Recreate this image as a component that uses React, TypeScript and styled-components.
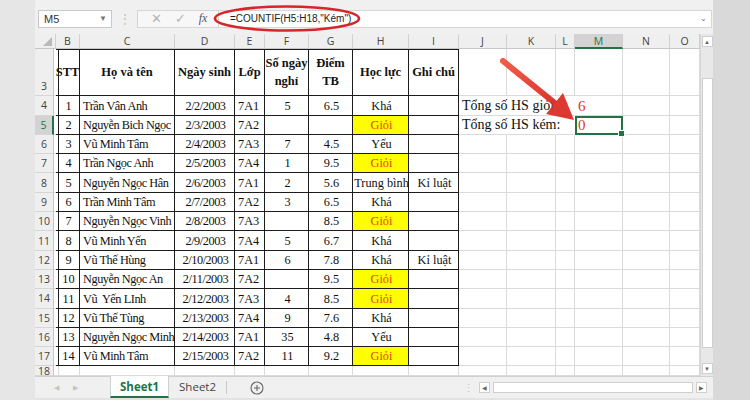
import styled, { createGlobalStyle } from 'styled-components';

const GlobalStyle = createGlobalStyle`
  body {
    margin: 0;
    background: #e3e3e3;
    font-family: "Liberation Sans", Arial, sans-serif;
  }
`;

const Page = styled.div`
  width: 750px;
  height: 400px;
  display: flex;
  background: #e3e3e3;
  overflow: hidden;
`;

const Gutter = styled.div<{ $w: number; $bg: string }>`
  width: ${({ $w }) => $w}px;
  flex-shrink: 0;
  background: ${({ $bg }) => $bg};
`;

const Window = styled.div`
  width: 678px;
  height: 398px;
  flex-shrink: 0;
  display: flex;
  flex-direction: column;
  background: #f0f0f0;
  position: relative;
`;

/* ---------- formula bar ---------- */

const FormulaBar = styled.div`
  height: 35px;
  display: flex;
  align-items: center;
  padding: 3px 0 0 3px;
  box-sizing: border-box;
  position: relative;
`;

const NameBox = styled.div`
  width: 74px;
  height: 18px;
  box-sizing: border-box;
  background: #fff;
  border: 1px solid #c8c8c8;
  display: flex;
  align-items: center;
  justify-content: space-between;
  padding: 0 4px 0 5px;
  font-family: "Liberation Sans", Arial, sans-serif;
  font-size: 11px;
  color: #333;
`;

const Caret = styled.span`
  font-size: 8px;
  color: #777;
`;

const Dots = styled.span`
  width: 25px;
  text-align: center;
  color: #c0c0c0;
  font-size: 12px;
`;

const FxGroup = styled.div`
  width: 81px;
  height: 18px;
  box-sizing: border-box;
  border: 1px solid #d6d6d6;
  border-right: none;
  background: #f7f7f7;
  display: flex;
  align-items: center;
  justify-content: space-around;
  padding: 0 4px 0 6px;
  color: #b4b4b4;
  font-size: 13px;
`;

const FxLabel = styled.span`
  font-family: "Liberation Serif", serif;
  font-style: italic;
  font-size: 12px;
  color: #555;
`;

const FormulaInput = styled.div`
  width: 494px;
  height: 18px;
  box-sizing: border-box;
  border: 1px solid #d6d6d6;
  background: #fff;
  display: flex;
  align-items: center;
  justify-content: space-between;
  padding: 0 4px 0 11px;
  font-family: "Liberation Sans", Arial, sans-serif;
  font-size: 10px;
  color: #222;
`;

const Overlay = styled.svg`
  position: absolute;
  left: 0;
  top: 0;
  pointer-events: none;
`;

/* ---------- grid ---------- */

const GridArea = styled.div`
  display: flex;
  position: relative;
`;

const colWidths = [19, 2, 24, 95, 60, 30, 44, 44, 56, 50, 48, 49, 19, 48, 47, 30];

const Sheet = styled.div`
  width: 665px;
  display: grid;
  grid-template-columns: ${colWidths.map((w) => `${w}px`).join(' ')};
  grid-template-rows: 15px 47px repeat(14, 19.3px) 10px;
  background: #fff;
  overflow: hidden;
`;

const Corner = styled.div`
  grid-column: span 2;
  background: #efefef;
  border-right: 1px solid #d0d0d0;
  border-bottom: 1px solid #c6c6c6;
  position: relative;
  &:after {
    content: '';
    position: absolute;
    right: 3px;
    bottom: 2px;
    border-left: 9px solid transparent;
    border-bottom: 9px solid #b9b9b9;
  }
`;

const ColHead = styled.div<{ $active?: boolean }>`
  background: ${({ $active }) => ($active ? '#d3d3d3' : '#efefef')};
  color: ${({ $active }) => ($active ? '#217346' : '#444')};
  border-right: 1px solid #d0d0d0;
  border-bottom: ${({ $active }) => ($active ? '2px solid #217346' : '1px solid #c6c6c6')};
  font-family: "Open Sans", sans-serif;
  font-size: 10.5px;
  display: flex;
  align-items: center;
  justify-content: center;
  overflow: hidden;
`;

const RowHead = styled.div<{ $active?: boolean; $bottom?: boolean }>`
  background: ${({ $active }) => ($active ? '#d3d3d3' : '#efefef')};
  color: ${({ $active }) => ($active ? '#217346' : '#444')};
  border-right: ${({ $active }) => ($active ? '2px solid #217346' : '1px solid #c6c6c6')};
  border-bottom: 1px solid #d6d6d6;
  font-family: "Open Sans", sans-serif;
  font-size: 10.5px;
  display: flex;
  align-items: ${({ $bottom }) => ($bottom ? 'flex-end' : 'center')};
  justify-content: center;
  padding-bottom: ${({ $bottom }) => ($bottom ? '2px' : '0')};
  box-sizing: border-box;
`;

type Align = 'left' | 'center' | 'right';

const Cell = styled.div<{
  $align?: Align;
  $table?: boolean;
  $top?: boolean;
  $edge?: boolean;
  $spill?: boolean;
  $bg?: string;
  $color?: string;
  $head?: boolean;
  $size?: number;
  $tight?: boolean;
}>`
  min-width: 0;
  display: flex;
  align-items: ${({ $head }) => ($head ? 'center' : 'flex-end')};
  justify-content: ${({ $align }) =>
    $align === 'left' ? 'flex-start' : $align === 'right' ? 'flex-end' : 'center'};
  text-align: center;
  padding: ${({ $head }) => ($head ? '0' : '0 1px 1px 3px')};
  box-sizing: border-box;
  white-space: ${({ $head }) => ($head ? 'normal' : 'pre')};
  font-family: "Liberation Serif", "Times New Roman", serif;
  font-size: ${({ $size }) => $size ?? 12.3}px;
  font-weight: ${({ $head }) => ($head ? 700 : 400)};
  letter-spacing: ${({ $tight }) => ($tight ? '-0.45px' : '0')};
  line-height: ${({ $head }) => ($head ? '18px' : '16px')};
  color: ${({ $color }) => $color ?? '#111'};
  background: ${({ $bg }) => $bg ?? 'transparent'};
  border-bottom: 1px solid ${({ $table }) => ($table ? '#1c1c1c' : '#dadada')};
  border-right: ${({ $table, $edge, $spill }) =>
    $spill ? '1px solid transparent' : `1px solid ${$table || $edge ? '#1c1c1c' : '#dadada'}`};
  box-shadow: ${({ $top }) => ($top ? 'inset 0 1px 0 #1c1c1c' : 'none')};
  overflow: visible;
`;

const Selected = styled(Cell)`
  position: relative;
  outline: 2px solid #217346;
  outline-offset: -2px;
  &:after {
    content: '';
    position: absolute;
    right: -3px;
    bottom: -3px;
    width: 5px;
    height: 5px;
    background: #217346;
    border: 1px solid #fff;
  }
`;

const VScroll = styled.div`
  width: 13px;
  background: #e8e8e8;
  border-left: 1px solid #d6d6d6;
  box-sizing: border-box;
  display: flex;
  flex-direction: column;
  align-items: center;
  padding: 2px 0 2px;
`;

const ScrollBtn = styled.div`
  width: 11px;
  height: 11px;
  background: #fff;
  border: 1px solid #cfcfcf;
  box-sizing: border-box;
  display: flex;
  align-items: center;
  justify-content: center;
  font-size: 6px;
  color: #666;
`;

const VThumb = styled.div`
  width: 11px;
  height: 270px;
  margin: 31px 0 auto;
  background: #fff;
  border: 1px solid #cfcfcf;
  box-sizing: border-box;
`;

/* ---------- tab bar ---------- */

const TabBar = styled.div`
  height: 21px;
  display: flex;
  align-items: stretch;
  border-top: 1px solid #d0d0d0;
  background: #f0f0f0;
  font-family: "Open Sans", sans-serif;
  font-size: 11.5px;
`;

const NavArrows = styled.div`
  width: 75px;
  display: flex;
  align-items: center;
  gap: 14px;
  padding-left: 19px;
  box-sizing: border-box;
  color: #c4c4c4;
  font-size: 7px;
`;

const Tab = styled.div<{ $active?: boolean }>`
  padding: 0 ${({ $active }) => ($active ? '9px' : '10px')};
  display: flex;
  align-items: center;
  background: ${({ $active }) => ($active ? '#fff' : 'transparent')};
  color: ${({ $active }) => ($active ? '#217346' : '#444')};
  font-weight: ${({ $active }) => ($active ? 700 : 400)};
  border-bottom: ${({ $active }) => ($active ? '2px solid #217346' : '2px solid transparent')};
  border-left: ${({ $active }) => ($active ? '1px solid #d0d0d0' : 'none')};
  border-right: ${({ $active }) => ($active ? '1px solid #d0d0d0' : 'none')};
  margin-top: -1px;
`;

const TabSep = styled.div`
  width: 1px;
  margin: 4px 0;
  background: #c8c8c8;
`;

const AddSheet = styled.div`
  width: 60px;
  display: flex;
  align-items: center;
  justify-content: center;
`;

const TabSpacer = styled.div`
  flex: 1;
`;

const HScroll = styled.div`
  width: 251px;
  display: flex;
  align-items: center;
  gap: 3px;
  padding-right: 6px;
  box-sizing: border-box;
`;

const HDots = styled.span`
  color: #c4c4c4;
  font-size: 11px;
  width: 14px;
  text-align: center;
`;

const HThumb = styled.div`
  width: 205px;
  height: 11px;
  background: #fff;
  border: 1px solid #cfcfcf;
  box-sizing: border-box;
  margin-right: auto;
`;

/* ---------- data ---------- */

type Row = [number, string, string, string, string, string, string, string];

const rows: Row[] = [
  [1, 'Trần Vân Anh', '2/2/2003', '7A1', '5', '6.5', 'Khá', ''],
  [2, 'Nguyễn Bich Ngọc', '2/3/2003', '7A2', '', '', 'Giỏi', ''],
  [3, 'Vũ Minh Tâm', '2/4/2003', '7A3', '7', '4.5', 'Yếu', ''],
  [4, 'Trần Ngọc Anh', '2/5/2003', '7A4', '1', '9.5', 'Giỏi', ''],
  [5, 'Nguyễn Ngọc Hân', '2/6/2003', '7A1', '2', '5.6', 'Trung bình', 'Kỉ luật'],
  [6, 'Trần Minh Tâm', '2/7/2003', '7A2', '3', '6.5', 'Khá', ''],
  [7, 'Nguyễn Ngọc Vinh', '2/8/2003', '7A3', '', '8.5', 'Giỏi', ''],
  [8, 'Vũ Minh Yến', '2/9/2003', '7A4', '5', '6.7', 'Khá', ''],
  [9, 'Vũ Thế Hùng', '2/10/2003', '7A1', '6', '7.8', 'Khá', 'Kỉ luật'],
  [10, 'Nguyễn Ngọc An', '2/11/2003', '7A2', '', '9.5', 'Giỏi', ''],
  [11, 'Vũ  Yến LInh', '2/12/2003', '7A3', '4', '8.5', 'Giỏi', ''],
  [12, 'Vũ Thế Tùng', '2/13/2003', '7A4', '9', '7.6', 'Khá', ''],
  [13, 'Nguyễn Ngọc Minh', '2/14/2003', '7A1', '35', '4.8', 'Yếu', ''],
  [14, 'Vũ Minh Tâm', '2/15/2003', '7A2', '11', '9.2', 'Giỏi', ''],
];

const letters = ['A', 'B', 'C', 'D', 'E', 'F', 'G', 'H', 'I', 'J', 'K', 'L', 'M', 'N', 'O'];
const headers = ['STT', 'Họ và tên', 'Ngày sinh', 'Lớp', 'Số ngày nghỉ', 'Điểm TB', 'Học lực', 'Ghi chú'];
const aligns: Align[] = ['center', 'left', 'center', 'left', 'center', 'center', 'center', 'center'];

const RED = '#e2352a';

const Blanks = ({ n }: { n: number }) => (
  <>
    {Array.from({ length: n }, (_, i) => (
      <Cell key={i} />
    ))}
  </>
);

const App = () => {
  return (
    <Page>
      <GlobalStyle />
      <Gutter $w={35} $bg="#e6e6e6" />
      <Window>
        <FormulaBar>
          <NameBox>
            M5
            <Caret>▼</Caret>
          </NameBox>
          <Dots>⋮</Dots>
          <FxGroup>
            <span>✕</span>
            <span>✓</span>
            <FxLabel>fx</FxLabel>
          </FxGroup>
          <FormulaInput>
            =COUNTIF(H5:H18,"Kém")
            <Caret>⌄</Caret>
          </FormulaInput>
          <Overlay width="678" height="35">
            <ellipse cx="252" cy="18.5" rx="72" ry="12" fill="none" stroke="#d8252b" strokeWidth="2.6" />
          </Overlay>
        </FormulaBar>

        <GridArea>
          <Sheet>
            <Corner />
            {letters.slice(1).map((l) => (
              <ColHead key={l} $active={l === 'M'}>
                {l}
              </ColHead>
            ))}

            <RowHead $bottom>3</RowHead>
            <Cell $edge />
            {headers.map((h) => (
              <Cell key={h} $table $top $head $size={12.5}>
                {h}
              </Cell>
            ))}
            <Blanks n={6} />

            {rows.map((r, idx) => {
              const rowNo = idx + 4;
              return [
                <RowHead key={`h${rowNo}`} $active={rowNo === 5}>
                  {rowNo}
                </RowHead>,
                <Cell key={`a${rowNo}`} $edge />,
                ...r.map((v, c) => {
                  const gioi = c === 6 && v === 'Giỏi';
                  return (
                    <Cell
                      key={`${rowNo}-${c}`}
                      $table
                      $align={aligns[c]}
                      $tight={c === 1 || c === 2}
                      $bg={gioi ? '#ffff00' : undefined}
                      $color={gioi ? '#e8401c' : undefined}
                    >
                      {v}
                    </Cell>
                  );
                }),
                rowNo === 4 ? (
                  <Cell key="j4" $align="left" $spill $size={14}>
                    Tổng số HS giỏi
                  </Cell>
                ) : rowNo === 5 ? (
                  <Cell key="j5" $align="left" $spill $size={14}>
                    Tổng số HS kém:
                  </Cell>
                ) : (
                  <Cell key={`j${rowNo}`} />
                ),
                <Cell key={`k${rowNo}`} $spill={rowNo < 6} />,
                <Cell key={`l${rowNo}`} $spill={rowNo < 6} />,
                rowNo === 4 ? (
                  <Cell key="m4" $align="left" $color={RED} $size={15}>
                    6
                  </Cell>
                ) : rowNo === 5 ? (
                  <Selected key="m5" $align="left" $color={RED} $size={15}>
                    0
                  </Selected>
                ) : (
                  <Cell key={`m${rowNo}`} />
                ),
                <Cell key={`n${rowNo}`} />,
                <Cell key={`o${rowNo}`} />,
              ];
            })}

            <RowHead>18</RowHead>
            <Blanks n={15} />
          </Sheet>

          <VScroll>
            <ScrollBtn>▲</ScrollBtn>
            <VThumb />
            <ScrollBtn>▼</ScrollBtn>
          </VScroll>

          <Overlay width="678" height="342">
            <defs>
              <linearGradient id="arrowFill" x1="0" y1="0" x2="1" y2="1">
                <stop offset="0" stopColor="#f0553f" />
                <stop offset="1" stopColor="#d92b22" />
              </linearGradient>
            </defs>
            <g transform="translate(-35 -35)" opacity="0.95">
              <line x1="503" y1="62" x2="556" y2="105" stroke="url(#arrowFill)" strokeWidth="6" strokeLinecap="round" />
              <polygon points="574,121 546,115 563,94" fill="#db2f25" />
            </g>
          </Overlay>
        </GridArea>

        <TabBar>
          <NavArrows>
            <span>◀</span>
            <span>▶</span>
          </NavArrows>
          <Tab $active>Sheet1</Tab>
          <Tab>Sheet2</Tab>
          <TabSep />
          <AddSheet>
            <svg width="14" height="14" viewBox="0 0 14 14">
              <circle cx="7" cy="7" r="6" fill="none" stroke="#666" strokeWidth="1.1" />
              <path d="M7 4v6M4 7h6" stroke="#666" strokeWidth="1.1" />
            </svg>
          </AddSheet>
          <TabSpacer />
          <HScroll>
            <HDots>⋮</HDots>
            <ScrollBtn>◀</ScrollBtn>
            <HThumb />
            <ScrollBtn>▶</ScrollBtn>
          </HScroll>
        </TabBar>
      </Window>
      <Gutter $w={37} $bg="#d9d9d9" />
    </Page>
  );
};

export default App;
